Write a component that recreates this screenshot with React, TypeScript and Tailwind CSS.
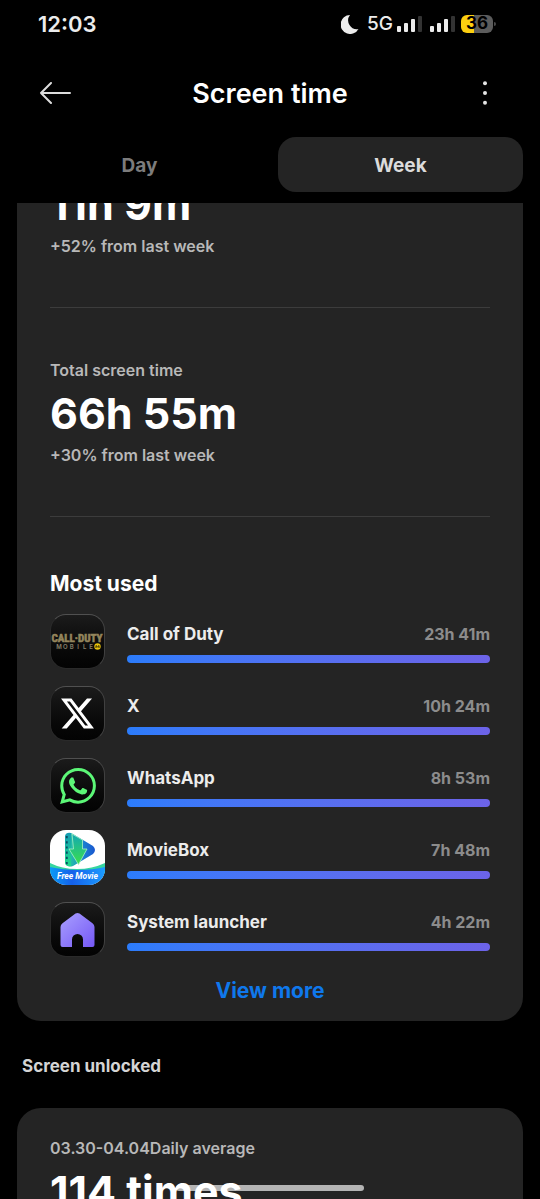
import { useState, type ReactNode } from 'react'
import { SiWhatsapp, SiX } from 'react-icons/si'

interface AppUsage {
  name: string
  time: string
  icon: ReactNode
}

function DarkTile({ children }: { children: ReactNode }) {
  return (
    <div className="flex size-[55px] shrink-0 items-center justify-center overflow-hidden rounded-2xl border border-t-[#505050] border-r-[#404040] border-b-[#2a2a2a] border-l-[#2a2a2a] bg-linear-to-b from-[#1b1b1b] to-[#030303]">
      {children}
    </div>
  )
}

function CallOfDutyIcon() {
  return (
    <DarkTile>
      <svg viewBox="0 0 53 53" className="size-[53px] shrink-0" aria-hidden="true">
        <text x="26" y="27" textAnchor="middle" fontFamily="'Liberation Sans Narrow', 'Roboto Condensed', 'Liberation Sans', sans-serif" fontSize="11" fontWeight="700" fill="#94855c" stroke="#94855c" strokeWidth="0.6">
          CALL·DUTY
        </text>
        {['M', 'O', 'B', 'I', 'L', 'E'].map((c, i) => (
          <text key={i} x={8 + i * 6.4} y="34" textAnchor="middle" fontFamily="Inter, sans-serif" fontSize="6" fontWeight="600" fill="#8b836c">
            {c}
          </text>
        ))}
        <circle cx="46.500" cy="31.500" r="3.200" fill="#e8c30c" />
        <path d="M45 33v-2.400l1.500 1.200 1.500-1.200V33" fill="none" stroke="#2b2500" strokeWidth="1" />
      </svg>
    </DarkTile>
  )
}

function MovieBoxIcon() {
  return (
    <svg viewBox="0 0 55 55" className="size-[55px] shrink-0 rounded-2xl" aria-hidden="true">
      <defs>
        <linearGradient id="mb-base" x1="0" y1="0" x2="1" y2="0">
          <stop offset="0" stopColor="#0a9cf5" />
          <stop offset="0.4" stopColor="#1560ea" />
          <stop offset="1" stopColor="#1b9cff" />
        </linearGradient>
        <linearGradient id="mb-film" x1="0" y1="0" x2="0" y2="1">
          <stop offset="0" stopColor="#149cb4" />
          <stop offset="1" stopColor="#1fdc8a" />
        </linearGradient>
        <linearGradient id="mb-play" x1="0" y1="0" x2="1" y2="0">
          <stop offset="0" stopColor="#2bd98f" />
          <stop offset="0.5" stopColor="#1a8bd0" />
          <stop offset="1" stopColor="#1a56d0" />
        </linearGradient>
        <linearGradient id="mb-arrow" x1="0" y1="0" x2="0" y2="1">
          <stop offset="0" stopColor="#12a8b4" />
          <stop offset="1" stopColor="#3be04a" />
        </linearGradient>
      </defs>
      <rect width="55" height="55" fill="#fff" />
      <path d="M0 33q12 6 27 6t28-6v10H0z" fill="#35d6a0" />
      <path d="M0 37q13 3 28 3t27-3v20H0z" fill="url(#mb-base)" />
      <path d="M17 4q3-2 6 0l20 12q4 4 0 8L23 36q-6 2-7-3V8q0-3 1-4z" fill="url(#mb-play)" />
      <path d="M15 6q1-4 6-3v33q-5 1-6-3z" fill="url(#mb-film)" />
      <path d="M16.800 6v30" stroke="#0b4a62" strokeWidth="1.800" strokeDasharray="2.200 3" />
      <path d="M22 4l10.500 6v9h4.500L28.500 34.500 19 19h4.500z" fill="url(#mb-arrow)" stroke="#a9f3c4" strokeWidth="0.800" />
      <text x="27.500" y="49" textAnchor="middle" fontFamily="Roboto, sans-serif" fontSize="8.500" fontWeight="700" fontStyle="italic" fill="#fff">
        Free Movie
      </text>
    </svg>
  )
}

function LauncherIcon() {
  return (
    <DarkTile>
      <svg viewBox="0 0 53 53" className="size-[53px] shrink-0" aria-hidden="true">
        <defs>
          <linearGradient id="home-fill" x1="0" y1="0" x2="1" y2="1">
            <stop offset="0" stopColor="#a9a0ff" />
            <stop offset="1" stopColor="#7558f5" />
          </linearGradient>
        </defs>
        <path
          d="M24.500 10.600q2-1.400 4 0l13 9.600q2 1.400 2 3.800v18q0 2-2 2H32V36.500a5.500 5.500 0 0 0-11 0V44H11.500q-2 0-2-2V24q0-2.400 2-3.800z"
          fill="url(#home-fill)"
        />
      </svg>
    </DarkTile>
  )
}

const apps: AppUsage[] = [
  { name: 'Call of Duty', time: '23h 41m', icon: <CallOfDutyIcon /> },
  { name: 'X', time: '10h 24m', icon: <DarkTile><SiX className="size-[33px] text-white" /></DarkTile> },
  { name: 'WhatsApp', time: '8h 53m', icon: <DarkTile><SiWhatsapp className="size-9 text-[#5cf777]" /></DarkTile> },
  { name: 'MovieBox', time: '7h 48m', icon: <MovieBoxIcon /> },
  { name: 'System launcher', time: '4h 22m', icon: <LauncherIcon /> },
]

function Signal() {
  return (
    <svg viewBox="0 0 25 17" className="h-[17px] w-[25px]" aria-hidden="true">
      <rect x="0" y="10" width="4" height="6" rx="1" fill="#ececec" />
      <rect x="7" y="7" width="4" height="9" rx="1" fill="#ececec" />
      <rect x="14" y="3" width="4" height="13" rx="1" fill="#ececec" />
      <rect x="21" y="0" width="4" height="16" rx="1" fill="#333" />
    </svg>
  )
}

function StatusBar() {
  return (
    <div className="flex h-12 items-center justify-between pr-11 pl-[38px] text-[#ececec]">
      <span className="text-[22px] font-semibold">12:03</span>
      <div className="flex items-center">
        <svg viewBox="0 0 18 19" className="mr-2 h-[19px] w-[18px]" aria-hidden="true">
          <path d="M9 0A9.500 9.500 0 1 0 17.500 14 8.800 8.800 0 0 1 9 0z" fill="#ececec" />
        </svg>
        <span className="mr-1 text-[19px] font-medium">5G</span>
        <Signal />
        <span className="w-2" />
        <Signal />
        <div className="ml-[6px] flex h-[18px] w-8 items-center justify-center rounded-md bg-linear-to-r from-[#fccf10] from-40% to-[#5c5c5c] to-40% text-[17px] font-bold text-black">
          36
        </div>
        <span className="ml-px h-1 w-[2px] rounded-r-full bg-[#4a4a4a]" />
      </div>
    </div>
  )
}

function Stat({ label, value, change }: { label?: string; value: string; change?: string }) {
  return (
    <div>
      {label && <p className="text-[16px] leading-[26px] font-semibold text-[#b8b8b8]">{label}</p>}
      <p className="text-[43px] leading-[60px] font-bold text-white">{value}</p>
      {change && <p className="text-[16px] leading-6 font-semibold text-[#b8b8b8]">{change}</p>}
    </div>
  )
}

export default function App() {
  const [tab, setTab] = useState('Week')

  return (
    <div className="flex h-screen flex-col overflow-hidden bg-black font-[Inter,sans-serif]">
      <header className="shrink-0">
        <StatusBar />
        <div className="flex h-[89px] items-center justify-between px-[39px]">
          <button aria-label="Back" className="w-8">
            <svg viewBox="0 0 32 22" className="h-[22px] w-8" fill="none" stroke="#dcdcdc" strokeWidth="2" strokeLinecap="round" strokeLinejoin="round">
              <path d="M12 1L2 11l10 10M2 11h29" />
            </svg>
          </button>
          <h1 className="pt-[3px] text-[27px] font-semibold text-white">Screen time</h1>
          <button aria-label="More options" className="flex w-8 justify-center">
            <svg viewBox="0 0 6 24" className="h-6 w-[6px]" fill="#e4e4e4">
              <circle cx="3" cy="2.300" r="2" />
              <circle cx="3" cy="12" r="2" />
              <circle cx="3" cy="21.700" r="2" />
            </svg>
          </button>
        </div>
        <div role="tablist" className="flex gap-4 px-[17px] pb-[11px]">
          {['Day', 'Week'].map(t => (
            <button
              key={t}
              role="tab"
              aria-selected={tab === t}
              onClick={() => setTab(t)}
              className={`h-[55px] flex-1 rounded-[18px] pt-1 text-[19px] font-bold ${tab === t ? 'bg-[#242424] text-[#dcdcdc]' : 'text-[#7c7c7c]'}`}
            >
              {t}
            </button>
          ))}
        </div>
      </header>

      <main className="min-h-0 flex-1 overflow-hidden px-[17px]">
        {/* list is scrolled part way under the header */}
        <section className="-mt-14 rounded-3xl bg-[#242424] px-[33px] pt-[27px] pb-[14px]">
          <Stat value="11h 9m" change="+52% from last week" />
          <hr className="my-[49px] border-[#3c3c3c]" />
          <Stat label="Total screen time" value="66h 55m" change="+30% from last week" />
          <hr className="my-[49px] border-[#3c3c3c]" />

          <h2 className="text-[21px] leading-9 font-bold text-white">Most used</h2>
          <ul className="mt-3 flex flex-col gap-[17px]">
            {apps.map(a => (
              <li key={a.name} className="flex gap-[22px]">
                {a.icon}
                <div className="flex-1 pt-2">
                  <div className="flex items-center justify-between leading-6">
                    <span className="text-[17px] font-bold text-[#ececec]">{a.name}</span>
                    <span className="text-[16px] font-bold text-[#8c8c8c]">{a.time}</span>
                  </div>
                  <div className="mt-[9px] h-2 rounded-full bg-linear-to-r from-[#2b7cfb] to-[#6c63e8]" />
                </div>
              </li>
            ))}
          </ul>
          <button className="mt-[18px] block w-full text-center text-[21px] leading-8 font-bold text-[#0f78ec]">
            View more
          </button>
        </section>

        <h2 className="mt-8 mb-[29px] px-[5px] text-[17px] leading-[26px] font-bold text-[#d4d4d4]">Screen unlocked</h2>

        <section className="relative z-10 rounded-t-3xl bg-[#242424] px-[33px] pt-[27px] pb-10">
          <div className="absolute top-[77px] left-1/2 h-[6px] w-[188px] -translate-x-1/2 rounded-full bg-[#b4b4b4]" />
          <div className="relative">
            <Stat label="03.30-04.04Daily average" value="114 times" />
          </div>
        </section>
      </main>
    </div>
  )
}
